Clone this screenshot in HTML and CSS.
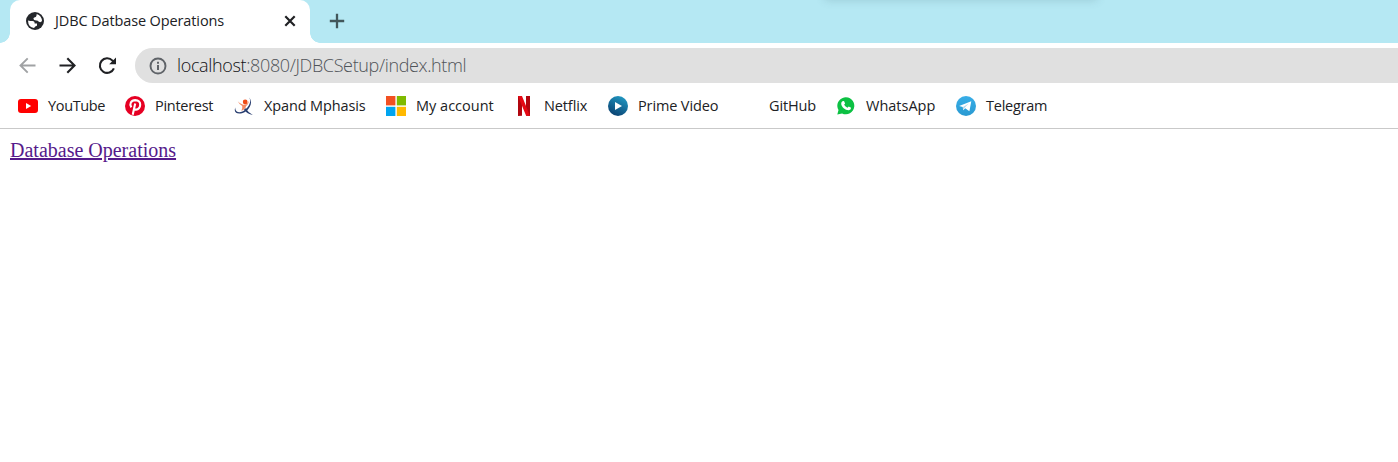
FILE: index.html
```html
<!DOCTYPE html>
<html lang="en">
<head>
<meta charset="utf-8">
<title>JDBC Datbase Operations</title>
<link rel="stylesheet" href="styles.css">
</head>
<body>
<header class="browser">
  <div class="tabstrip">
    <div class="corner corner-left"></div>
    <div class="tab">
      <svg class="globe" viewBox="0 0 18 18"><circle cx="9" cy="9" r="9" fill="#24272b"/><path d="M2 8.5Q4 9.1 6.4 9.1Q8.9 9.2 8.6 11.5H11V13.2Q11 14 9.6 14.2L8 16.1Q2.2 15.3 2 8.5ZM10.7 2.1Q15.6 3.6 16 9.1Q14.8 10.9 12.8 9.8Q11.9 8.5 10.2 8.6Q7.5 8.4 7.4 6.8Q7.5 5.5 9 5.2Q10.6 5.2 10.7 2.1Z" fill="#fff"/></svg>
      <span class="tab-title">JDBC Datbase Operations</span>
      <svg class="close" viewBox="0 0 12 12"><path d="M1.3 1.3 10.7 10.7M10.7 1.3 1.3 10.7" stroke="#202124" stroke-width="2.2"/></svg>
    </div>
    <div class="corner corner-right"></div>
    <svg class="plus" viewBox="0 0 16 16"><path d="M8 .8V15.2M.8 8H15.2" stroke="#42575b" stroke-width="2.3"/></svg>
    <div class="window-shadow"></div>
  </div>
  <nav class="toolbar">
    <svg class="arrow" viewBox="0 0 18 18"><path d="M17.5 8.5H2.5M9.7 1.3 2.5 8.5l7.2 7.2" fill="none" stroke="#a0a2a4" stroke-width="1.9"/></svg>
    <svg class="arrow" viewBox="0 0 18 18"><path d="M1.5 8.5H16.5M9.3 1.3 16.5 8.5l-7.2 7.2" fill="none" stroke="#202124" stroke-width="2.1"/></svg>
    <svg class="arrow" viewBox="0 0 18 18"><path d="M15.9 11.4A7.3 7.3 0 1 1 14.5 3.6L15.3 4.5" fill="none" stroke="#202124" stroke-width="2.1"/><path d="M18 .5V7.3H11.2Z" fill="#202124"/></svg>
    <div class="omnibox">
      <svg class="info" viewBox="0 0 18 18"><circle cx="9" cy="9" r="7.5" fill="none" stroke="#5f6368" stroke-width="1.9"/><path d="M9 8v5M9 4.8v1.9" stroke="#5f6368" stroke-width="2"/></svg>
      <span class="url"><span class="host">localhost</span>:8080/JDBCSetup/index.html</span>
    </div>
  </nav>
  <nav class="bookmarks">
    <a class="bookmark youtube"><svg viewBox="0 0 20 20"><rect y="3" width="20" height="14" rx="3" fill="#f00"/><path d="m8 7 5.2 3L8 13Z" fill="#fff"/></svg><span>YouTube</span></a>
    <a class="bookmark pinterest"><svg viewBox="0 0 20 20"><circle cx="10" cy="10" r="10" fill="#e60023"/><path d="M6.3 11.3C4.1 8 6 4.2 10.2 4.1c3.5 0 5.1 2.1 5 4.6-.1 3-2 5-4.2 4.9-1 0-1.7-.5-1.9-1.1M10.2 7.5 7.7 18.7" fill="none" stroke="#fff" stroke-width="2.1"/></svg><span>Pinterest</span></a>
    <a class="bookmark xpand"><svg viewBox="0 0 20 20"><path d="M1.5 11.2C.2 16.3 6.5 18.1 11.3 13.6 15.8 9.4 17.4 5.3 15.2 1.5c3.7 4.7 1.2 10-2.9 13.4C6.5 19.6-1.8 18 1.5 11.2Z" fill="#293e70"/><path d="M11.6 12.2Q14 16.3 18.8 18.9Q13.2 18.1 10 13.5Z" fill="#293e70"/><circle cx="11.2" cy="6" r="2.4" fill="#f04b16"/><path d="M3.7 5.2Q6 7.8 9.1 8.8L12.1 8.4Q14.1 7.1 15.3 4.6Q14.6 8.2 12 10.2L11.3 12.2Q9.5 14.1 7.4 14.9Q8.7 12.6 8.2 10.1Q5.3 8.2 3.7 5.2Z" fill="#f58a63"/></svg><span>Xpand Mphasis</span></a>
    <a class="bookmark account"><svg viewBox="0 0 20 20"><path d="M0 0h9.4v9.4H0Z" fill="#f25022"/><path d="M10.8 0H20v9.4h-9.2Z" fill="#7fba00"/><path d="M0 10.8h9.4V20H0Z" fill="#00a4ef"/><path d="M10.8 10.8H20V20h-9.2Z" fill="#ffb900"/></svg><span>My account</span></a>
    <a class="bookmark netflix"><svg viewBox="0 0 20 20"><path d="M4 0h4v19.7L4 20ZM12 0h4v20l-4-.3Z" fill="#b1060f"/><path d="M4 0h4l8 20-4-.4Z" fill="#e50914"/></svg><span>Netflix</span></a>
    <a class="bookmark prime"><svg viewBox="0 0 20 20"><defs><linearGradient id="prime" x1=".8" y1="0" x2=".3" y2="1"><stop stop-color="#219bc5"/><stop offset="1" stop-color="#0a4070"/></linearGradient></defs><circle cx="10" cy="10" r="10" fill="url(#prime)"/><path d="m7 6 7 4-7 4Z" fill="#fff"/></svg><span>Prime Video</span></a>
    <a class="bookmark github"><svg viewBox="0 0 20 20"></svg><span>GitHub</span></a>
    <a class="bookmark whatsapp"><svg viewBox="0 0 20 20"><path d="m1.3 18.5 1.2-4.4A8.5 8.5 0 1 1 6.1 17.4Z" fill="#0cc143"/><path d="M6.4 5.3 8 5l1.1 2.6-1 1.2q1.3 2.2 3.4 3l1.2-1.2 2.4 1.2q-.1 2.2-2.3 2.5C9.5 14.5 5.3 10.9 5.2 7.8q0-1.6 1.2-2.5Z" fill="#fff"/></svg><span>WhatsApp</span></a>
    <a class="bookmark telegram"><svg viewBox="0 0 20 20"><defs><linearGradient id="telegram" x2="0" y2="1"><stop stop-color="#38aee8"/><stop offset="1" stop-color="#2999d1"/></linearGradient></defs><circle cx="10" cy="10" r="10" fill="url(#telegram)"/><path d="m3.1 10.1 12.2-4.9-1.9 10.1-4.2-3-2 1.9-.5-3.2Z" fill="#fff"/><path d="m7 11.1 5.7-3.6-4.3 4.4-1.2 2.2Z" fill="#b8d8eb"/></svg><span>Telegram</span></a>
  </nav>
</header>
<main class="page"><a class="page-link" href="#">Database Operations</a></main>
</body>
</html>
```
FILE: styles.css
```css
* { box-sizing: border-box; }
body { margin: 0; min-height: 462px; overflow: hidden; background: #fff; color: #202124; font-family: "Open Sans", "Noto Sans", sans-serif; }
svg { display: block; flex: none; }
.tabstrip { position: relative; height: 43px; display: flex; background: #b5e8f3; }
.corner { width: 10px; flex: none; }
.corner-left { background: radial-gradient(circle at 0 0, transparent 9.5px, #fff 10px) no-repeat 0 33px / 10px 10px; }
.corner-right { background: radial-gradient(circle at 100% 0, transparent 9.5px, #fff 10px) no-repeat 0 33px / 10px 10px; }
.tab { width: 300px; height: 43px; display: flex; align-items: center; padding: 0 14px 1px 16px; background: #fff; border-radius: 10px 10px 0 0; }
.globe { width: 18px; height: 18px; }
.tab-title { margin-left: 11px; font-size: 14.5px; letter-spacing: -.12px; white-space: nowrap; line-height: 20px; }
.close { width: 12px; height: 12px; margin-left: auto; }
.plus { width: 16px; height: 16px; margin: 13px 0 0 9px; }
.window-shadow { position: absolute; top: -10px; left: 825px; width: 272px; height: 8px; box-shadow: 0 2px 8px rgba(70, 110, 125, .25); }
.toolbar { height: 45px; display: flex; align-items: center; padding-left: 18px; gap: 22px; }
.arrow { width: 18px; height: 18px; }
.omnibox { flex: 1; height: 35px; margin-left: -3px; display: flex; align-items: center; padding-left: 14px; background: #e0e0e0; border-radius: 18px 0 0 18px; }
.info { width: 18px; height: 18px; }
.url { margin-left: 10px; padding-bottom: 1px; color: #505459; font-size: 18px; font-weight: 300; letter-spacing: -.36px; line-height: 24px; white-space: nowrap; }
.host { color: #101114; }
.bookmarks { height: 41px; display: flex; padding: 8px 0 0 18px; border-bottom: 1px solid #c9c9c9; }
.bookmark { height: 20px; flex: none; display: flex; align-items: center; gap: 10px; font-size: 14.5px; line-height: 20px; white-space: nowrap; }
.bookmark svg { width: 20px; height: 20px; }
.youtube { width: 107px; letter-spacing: -.35px; }
.pinterest { width: 109px; letter-spacing: -.28px; }
.xpand { width: 152px; letter-spacing: -.13px; }
.account { width: 128px; }
.netflix { width: 94px; letter-spacing: -.12px; }
.prime { width: 131px; letter-spacing: -.13px; }
.github { width: 97px; letter-spacing: -.15px; }
.whatsapp { width: 120px; }
.telegram { letter-spacing: -.25px; }
.page { padding: 9px 10px; }
.page-link { display: inline-block; color: #551a8b; font: 20px/24px "Liberation Serif", serif; text-decoration-thickness: 2px; text-underline-offset: 1px; }
```
